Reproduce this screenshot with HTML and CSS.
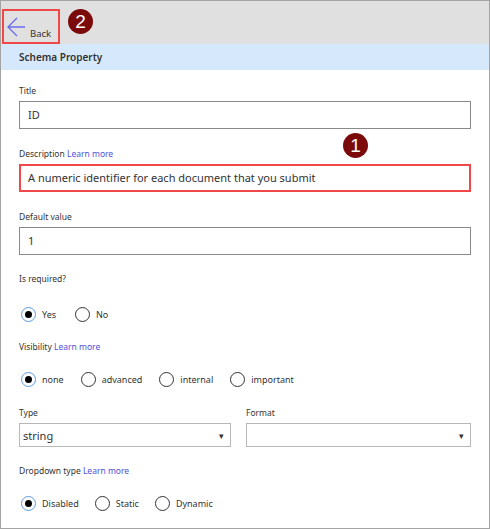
FILE: index.html
```html
<!DOCTYPE html>
<html>
<head>
<meta charset="utf-8">
<link rel="stylesheet" href="styles.css">
</head>
<body>
<div class="frame">
  <div class="topbar">
    <div class="back">
      <svg class="arrow" width="20" height="22" viewBox="0 0 20 22"><path d="M19 11H2M11 2L2 11L11 20" fill="none" stroke="#6a6af0" stroke-width="1.3"/></svg>
      <span class="back-text">Back</span>
    </div>
    <span class="badge badge-2">2</span>
  </div>
  <div class="band">Schema Property</div>
  <div class="form">
    <div class="label l-first">Title</div>
    <div class="input">ID</div>

    <div class="label l-desc">Description <a class="link">Learn more</a></div>
    <div class="input input-hl">A numeric identifier for each document that you submit</div>
    <span class="badge badge-1">1</span>

    <div class="label">Default value</div>
    <div class="input">1</div>

    <div class="label l-req">Is required?</div>
    <div class="radios r-req">
      <span class="radio on"></span><span class="opt">Yes</span>
      <span class="radio"></span><span class="opt">No</span>
    </div>

    <div class="label l-radio">Visibility <a class="link">Learn more</a></div>
    <div class="radios r-vis">
      <span class="radio on"></span><span class="opt">none</span>
      <span class="radio"></span><span class="opt">advanced</span>
      <span class="radio"></span><span class="opt">internal</span>
      <span class="radio"></span><span class="opt">important</span>
    </div>

    <div class="cols">
      <div class="col">
        <div class="label l-col">Type</div>
        <div class="select"><span>string</span><span class="caret">&#9662;</span></div>
      </div>
      <div class="col">
        <div class="label l-col">Format</div>
        <div class="select"><span></span><span class="caret">&#9662;</span></div>
      </div>
    </div>

    <div class="label l-dd">Dropdown type <a class="link">Learn more</a></div>
    <div class="radios r-dd">
      <span class="radio on"></span><span class="opt">Disabled</span>
      <span class="radio"></span><span class="opt">Static</span>
      <span class="radio"></span><span class="opt">Dynamic</span>
    </div>
  </div>
</div>
</body>
</html>
```

FILE: styles.css
```css
* { box-sizing: border-box; }
html, body { margin: 0; padding: 0; background: #fff; }
body { font-family: "Noto Sans", "Open Sans", sans-serif; color: #333; }

.frame {
  position: relative;
  width: 490px;
  height: 529px;
  border: 1px solid #a4a4a4;
  overflow: hidden;
}

.topbar {
  height: 43px;
  background: #e0e0e0;
  padding: 8px 0 0 1px;
}
.back {
  width: 58px;
  height: 35px;
  border: 2px solid #f04848;
  display: flex;
  align-items: flex-start;
  padding: 4px 0 0 2px;
}
.arrow { display: block; margin-top: 1px; }
.back-text { font-size: 9.5px; margin: 12px 0 0 4px; color: #333; }

.badge {
  position: absolute;
  width: 25px;
  height: 25px;
  border-radius: 50%;
  background: #7b0b0b;
  color: #fff;
  font-family: "Liberation Sans", Arial, sans-serif;
  font-size: 19px;
  line-height: 25px;
  text-align: center;
}
.badge-2 { left: 67px; top: 8px; }
.badge-1 { left: 342px; top: 132px; }

.band {
  height: 26px;
  background: #d6e8fc;
  padding-left: 18px;
  font-size: 10px;
  font-weight: 600;
  line-height: 27px;
  color: #333;
}

.form { padding: 0 18px; }

.label {
  font-size: 8.5px;
  line-height: 14px;
  height: 14px;
  margin-top: 18px;
  margin-bottom: 3px;
  color: #333;
}
.l-first { margin-top: 14px; }
.l-desc { margin-top: 18px; }
.link { color: #4f4fd9; }

.input {
  height: 28px;
  border: 1px solid #8a8a8a;
  padding-left: 8px;
  font-size: 11px;
  line-height: 26px;
  color: #333;
}
.input-hl { border: 2px solid #f04848; line-height: 24px; padding-left: 7px; }

.radios {
  display: flex;
  align-items: center;
  height: 18px;
  margin-top: 19px;
  padding-left: 2px;
  font-size: 9px;
}
.radio {
  width: 15px;
  height: 15px;
  border: 1px solid #333;
  border-radius: 50%;
  flex: none;
  margin-right: 6px;
  display: flex;
  align-items: center;
  justify-content: center;
}
.radio.on { border-color: #5c9ae6; }
.radio.on::after {
  content: "";
  width: 7px;
  height: 7px;
  border-radius: 50%;
  background: #000;
}
.opt { margin-right: 19px; }

.l-req { margin-top: 17px; }
.r-req { margin-top: 19px; }

.l-radio { margin-top: 17px; }
.r-vis { margin-top: 16px; }
.r-vis .opt { margin-right: 17px; }

.cols { display: grid; grid-template-columns: 212px 225px; column-gap: 15px; margin-top: 18px; }
.l-col { margin-top: 0; }
.select {
  height: 24px;
  border: 1px solid #b8b8b8;
  display: flex;
  align-items: center;
  justify-content: space-between;
  padding: 0 6px 0 3px;
  font-size: 11px;
  color: #333;
}
.caret { font-size: 9px; color: #333; }

.l-dd { margin-top: 17px; }
.r-dd { margin-top: 16px; }
.r-dd .opt { margin-right: 16px; }
```
